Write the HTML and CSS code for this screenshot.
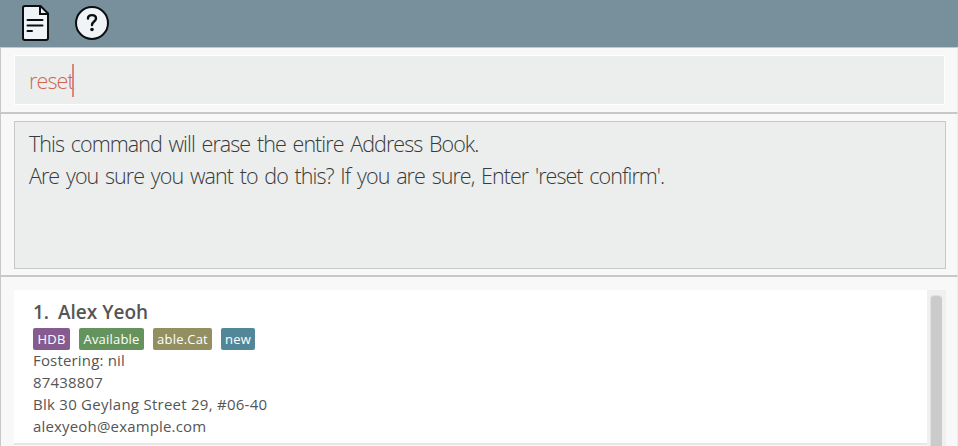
FILE: index.html
```
<!DOCTYPE html>
<html lang="en">
<head>
<meta charset="utf-8">
<title>Address Book</title>
<link rel="stylesheet" href="styles.css">
</head>
<body>
<div class="window">
  <header class="menu">
    <svg class="icon-doc" width="28" height="36" viewBox="0 0 28 36">
      <path d="M3 1H18.500L26 8.500V33Q26 35 24 35H3Q1 35 1 33V3Q1 1 3 1Z" fill="#f0f4f6" stroke="#0b0f11" stroke-width="2"/>
      <path d="M18 1.500V9H26" fill="none" stroke="#0b0f11" stroke-width="2"/>
      <path d="M5.500 15H20.500M5.500 20.500H20.500M5.500 26H10" fill="none" stroke="#0b0f11" stroke-width="2" stroke-linecap="round"/>
    </svg>
    <svg class="icon-help" width="36" height="36" viewBox="0 0 36 36">
      <circle cx="18" cy="18" r="16" fill="#f0f4f6" stroke="#0b0f11" stroke-width="2"/>
      <path d="M14 13.500C14 9 22 9 22 13.500C22 16.500 18 16.500 18 20" fill="none" stroke="#0b0f11" stroke-width="2.400" stroke-linecap="round"/>
      <circle cx="18" cy="24.500" r="1.800" fill="#0b0f11"/>
    </svg>
  </header>
  <section class="pane command-pane">
    <div class="command"><span class="typed">reset</span><span class="caret"></span></div>
  </section>
  <section class="pane result-pane">
    <div class="result">
      <p>This command will erase the entire Address Book.</p>
      <p>Are you sure you want to do this? If you are sure, Enter 'reset confirm'.</p>
    </div>
  </section>
  <main class="pane list-pane">
    <article class="card">
      <h2><span class="index">1.</span><span class="name">Alex Yeoh</span></h2>
      <div class="tags">
        <span class="tag housing">HDB</span>
        <span class="tag status">Available</span>
        <span class="tag animal">able.Cat</span>
        <span class="tag new">new</span>
      </div>
      <p class="foster">Fostering: nil</p>
      <p class="phone">87438807</p>
      <p class="address">Blk 30 Geylang Street 29, #06-40</p>
      <p class="email">alexyeoh@example.com</p>
    </article>
    <div class="track"><div class="thumb"></div></div>
  </main>
</div>
</body>
</html>
```
FILE: styles.css
```
* { box-sizing: border-box; }
body { margin: 0; overflow: hidden; font-family: "Open Sans", "Noto Sans", sans-serif; }
p, h2 { margin: 0; white-space: pre; }
.window { width: 958px; height: 446px; display: flex; flex-direction: column; background: #f8f8f8; }
.menu { height: 47px; flex: none; display: flex; align-items: flex-start; gap: 24px; padding: 5px 0 0 22px; background: #78909c; }
.menu svg { display: block; flex: none; }
.pane { flex: none; border-left: 1px solid #c8c8c8; border-right: 1px solid #ececec; }
.command-pane { height: 67px; padding: 7px 12px 0 13px; border-top: 1px solid #c8c8c8; border-bottom: 2px solid #c8c8c8; }
.command { height: 50px; display: flex; align-items: center; padding-left: 14px; border: 1px solid #fff; background: #ebeeed; font-weight: 300; font-size: 21.5px; color: #d06651; }
.typed { width: 43px; letter-spacing: -0.9px; }
.caret { width: 2px; height: 33px; background: #d98779; }
.result-pane { height: 163px; padding: 7px 11px 0 13px; border-bottom: 2px solid #c8c8c8; }
.result { height: 148px; padding: 6px 14px; border: 1px solid #c8c8c8; background: #ebeeed; font-weight: 300; font-size: 21.5px; line-height: 32px; letter-spacing: -0.96px; word-spacing: 2.15px; color: #3a3a3a; }
.list-pane { height: 169px; display: flex; padding: 13px 11px 0 13px; }
.card { width: 913px; height: 155px; padding: 10px 19px 0; background: #fff; border-bottom: 2px solid #e6e6e6; color: #555; font-size: 15px; line-height: 22px; }
.card h2 { height: 28px; display: flex; font-size: 19px; font-weight: 600; line-height: 24px; }
.index { width: 25px; }
.tags { display: flex; gap: 9px; height: 22px; margin-bottom: -1px; }
.tag { border-radius: 2px; color: #fff; font-size: 13px; font-weight: 500; line-height: 22px; letter-spacing: 0.2px; text-align: center; white-space: nowrap; }
.housing { width: 37px; background: #865c90; }
.status { width: 65px; background: #64935d; }
.animal { width: 59px; background: #938f60; }
.new { width: 34px; background: #528798; }
.foster, .phone, .email { letter-spacing: 0.17px; }
.address { letter-spacing: 0.26px; }
.track { width: 19px; padding: 5px 4px 0 3px; background: #f0f0f0; }
.thumb { height: 160px; border: 1px solid #e2e2e2; border-width: 1px 0 0 1px; border-radius: 4px; background: #cbcbcb; }
```
